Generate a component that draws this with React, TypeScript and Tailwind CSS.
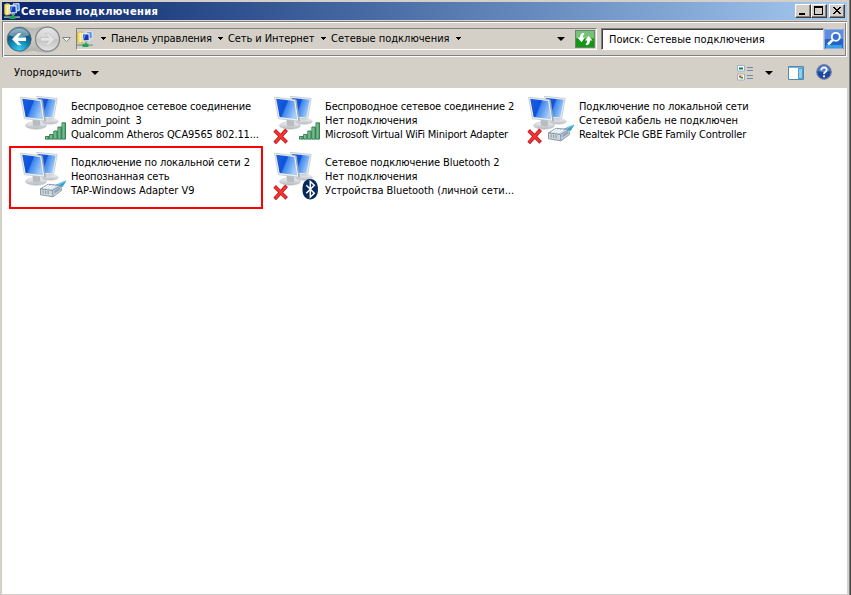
import React from "react";

type Badge = "signal" | "cable" | "bluetooth";

type Connection = {
  name: string;
  status: string;
  device: string;
  badge: Badge;
  off?: boolean;
  t: [string, string, string];
};

const connections: Connection[] = [
  { name: "Беспроводное сетевое соединение", status: "admin_point  3", device: "Qualcomm Atheros QCA9565 802.11...", badge: "signal", t: ["tracking-[-0.15px]", "tracking-[-0.22px]", "tracking-[-0.11px]"] },
  { name: "Беспроводное сетевое соединение 2", status: "Нет подключения", device: "Microsoft Virtual WiFi Miniport Adapter", badge: "signal", off: true, t: ["tracking-[-0.15px]", "tracking-[-0.05px]", "tracking-[-0.17px]"] },
  { name: "Подключение по локальной сети", status: "Сетевой кабель не подключен", device: "Realtek PCIe GBE Family Controller", badge: "cable", off: true, t: ["tracking-[-0.12px]", "tracking-[-0.04px]", "tracking-[-0.16px]"] },
  { name: "Подключение по локальной сети 2", status: "Неопознанная сеть", device: "TAP-Windows Adapter V9", badge: "cable", t: ["tracking-[-0.12px]", "tracking-[-0.16px]", "tracking-normal"] },
  { name: "Сетевое подключение Bluetooth 2", status: "Нет подключения", device: "Устройства Bluetooth (личной сети...", badge: "bluetooth", off: true, t: ["tracking-[-0.1px]", "tracking-[-0.05px]", "tracking-[-0.06px]"] },
];

function Gradients() {
  return (
    <svg width="0" height="0" className="absolute">
      <defs>
        <linearGradient id="screen" x1="0" y1="0.1" x2="1" y2="0.5">
          <stop offset="0" stopColor="#1c5fdc" />
          <stop offset="0.46" stopColor="#0f52dc" />
          <stop offset="0.52" stopColor="#3f86ee" />
          <stop offset="1" stopColor="#a5cefa" />
        </linearGradient>
        <linearGradient id="bar" x1="0" y1="0" x2="1" y2="0">
          <stop offset="0" stopColor="#9ad2ac" />
          <stop offset="1" stopColor="#4a9a66" />
        </linearGradient>
        <linearGradient id="stand" x1="0" y1="0" x2="0" y2="1">
          <stop offset="0" stopColor="#f4f5f6" />
          <stop offset="1" stopColor="#b4b8bd" />
        </linearGradient>
        <radialGradient id="back" cx="0.5" cy="0.95" r="0.9">
          <stop offset="0" stopColor="#35d0f4" />
          <stop offset="0.45" stopColor="#1387b8" />
          <stop offset="0.75" stopColor="#12567c" />
          <stop offset="1" stopColor="#6d9ab4" />
        </radialGradient>
        <linearGradient id="forward" x1="0" y1="0" x2="0" y2="1">
          <stop offset="0" stopColor="#e6e6e6" />
          <stop offset="0.48" stopColor="#d2d2d2" />
          <stop offset="0.52" stopColor="#c4c4c4" />
          <stop offset="1" stopColor="#e4e4e4" />
        </linearGradient>
        <linearGradient id="pill" x1="0" y1="0" x2="0" y2="1">
          <stop offset="0" stopColor="#b4b4b2" />
          <stop offset="0.5" stopColor="#cfccc6" />
          <stop offset="1" stopColor="#b0b0ae" />
        </linearGradient>
      </defs>
    </svg>
  );
}

function FolderNetwork() {
  return (
    <svg width="16" height="16" viewBox="0 0 16 16" className="block shrink-0">
      <path d="M.5 1.500 3 .6l3 .6v10.300l-4 .7L.5 11z" fill="#f1d765" stroke="#d0ab3a" strokeWidth=".6" />
      <path d="M2.600 2h1.800v9l-1.800.6z" fill="#fff3ac" />
      <path d="m9 .9 6-.3.300 6.900-4.800.5z" fill="#4a90e6" stroke="#e6ebef" />
      <path d="m5.200 2.600 6.800.3.300 6.600-6 .6z" fill="#1236bc" stroke="#eef1f4" strokeWidth="1.100" />
      <path d="m6.400 3.600 2.400.1-1.300 4-.8.1z" fill="#5596ec" />
      <path d="M7.500 10.300h3.300v1.500H7.500z" fill="#b8c0c6" />
      <path d="M8 11.500h2v2H8z" fill="#3faf64" />
      <path d="M0 13.300h16v1.700H0z" fill="#8fa79a" />
      <path d="M5.500 12.800h6V16h-6z" fill="#1fa458" />
    </svg>
  );
}

function ConnectionIcon({ badge, off }: { badge: Badge; off?: boolean }) {
  return (
    <svg width="55" height="54" viewBox="0 0 55 54" className="block shrink-0">
      <ellipse cx="34" cy="27.500" rx="8.500" ry="2.800" fill="url(#stand)" stroke="#c9ccd0" strokeWidth=".5" />
      <path d="m29 23 5.500-.5 1.500 4.500-6 .5z" fill="#d7dade" />
      <path d="m20.500 2.300 20.700 2.200-3.700 20.500-10-.8z" fill="#eceff1" stroke="#b9bec4" strokeWidth=".7" />
      <path d="m22 3.900 17.700 1.900-3.400 17.600-8.300-.7z" fill="url(#screen)" />
      <ellipse cx="20" cy="31.500" rx="10.500" ry="3.700" fill="url(#stand)" stroke="#babec3" strokeWidth=".6" />
      <path d="m16.500 25.500 7.500.8.300 5.200c-2 1.200-5 1-7.300 0z" fill="#b9bdc2" />
      <path d="m4.600 3.200 21 2.500L29 27.200 8.400 24.600z" fill="#eff2f4" stroke="#b5bbc2" strokeWidth=".7" />
      <path d="m25.300 5.700 1.500.2 3 21.300-1.200.2z" fill="#9da5ae" />
      <path d="m6.200 4.800 18 2.100 2.900 18.300-17.500-2.200z" fill="url(#screen)" />
      {badge === "signal" && (
        <g fill="url(#bar)" stroke="#26794a" strokeWidth=".9">
          <path d="M29.500 42.500h3.600v2.600h-3.600z" />
          <path d="M33.600 40.500h3.600v4.600h-3.600z" />
          <path d="M37.800 37h3.500v8.100h-3.500z" />
          <path d="M41.900 33h3.500v12.100h-3.500z" />
          <path d="M46 28.800h3.500v16.300H46z" />
        </g>
      )}
      {badge === "cable" && (
        <g>
          <path d="m38.500 35.500 7.500-3.500 4.500-1.500-3.500 6-4 1z" fill="#35a6d4" />
          <path d="M41 35.500 49.500 31" stroke="#7fcde8" strokeWidth="1" />
          <path d="m24.500 38.800 7.500-4.500 13 1.200.500 5-8.500 6.300-12.500-2z" fill="#cbd7e2" stroke="#72869a" strokeWidth=".8" />
          <path d="m24.500 38.800 12 1.700 8.500-5M36.500 40.500l.5 6" fill="none" stroke="#6d8297" strokeWidth=".8" />
          <path d="m27.500 38.200 5.500-3.200M30.500 38.700l5.500-3.200M33.500 39.100l5.500-3.200" stroke="#fff" strokeWidth="1.100" />
          <path d="m27 40.500.2 3m2.300-2.700.2 3m2.300-2.700.2 3" stroke="#8b8a68" strokeWidth=".9" />
          <path d="m38.200 40.700 5.800-3.700.300 2.700-6 4z" fill="#8ea6bc" />
        </g>
      )}
      {badge === "bluetooth" && (
        <g>
          <rect x="32.500" y="29" width="15.400" height="20.500" rx="7.500" ry="8.500" fill="#06295c" />
          <path d="m36.300 35.200 8 8-4 3.800V31.400l4 3.800-8 8" fill="none" stroke="#fff" strokeWidth="1.500" />
        </g>
      )}
      {off && (
        <g fill="none" strokeLinecap="square">
          <path d="m6 37.800 9.300 9.200M15.300 37.200 6 47.500" stroke="#c8141c" strokeWidth="3.800" />
          <path d="m6 37.800 9.300 9.200M15.300 37.200 6 47.500" stroke="#ee3836" strokeWidth="2.200" />
        </g>
      )}
    </svg>
  );
}

function Caret({ wide }: { wide?: boolean }) {
  return wide ? (
    <svg width="8" height="4" viewBox="0 0 8 4" className="block shrink-0"><path d="M0 0h8L4 4z" /></svg>
  ) : (
    <svg width="5" height="3" viewBox="0 0 5 3" className="block shrink-0"><path d="M0 0h5v1H4v1H3v1H2V2H1V1H0z" /></svg>
  );
}

function WindowButton({ children }: { children: React.ReactNode }) {
  return (
    <div className="h-[14px] w-4 border border-t-white border-r-[#404040] border-b-[#404040] border-l-white bg-[#d4d0c8] shadow-[inset_-1px_-1px_0_#808080]">
      <svg width="14" height="12" viewBox="0 0 14 12" className="block" shapeRendering="crispEdges">{children}</svg>
    </div>
  );
}

function TitleBar() {
  return (
    <div className="flex h-[18px] items-center bg-linear-to-r from-[#0a246a] to-[#a6caf0] pr-[2px] pl-[2px]">
      <FolderNetwork />
      <div className="ml-px flex-1 pt-px text-[11px] font-bold tracking-[0.34px] text-white">Сетевые подключения</div>
      <WindowButton><path d="M3 8h6v2H3z" /></WindowButton>
      <WindowButton><path d="M2 1h9v9H2zM3 3v6h7V3z" fillRule="evenodd" /></WindowButton>
      <div className="w-[2px]" />
      <WindowButton><path d="M3 2h2v1h1v1h2V3h1V2h2v1h-1v1H9v1H8v1h1v1h1v1h1v1H9V8H8V7H6v1H5v1H3V8h1V7h1V6h1V5H5V4H4V3H3z" /></WindowButton>
    </div>
  );
}

function NavButtons() {
  return (
    <svg width="69" height="32" viewBox="0 0 69 32" className="block shrink-0">
      <path d="M15 2.500c8 0 10 1.500 14 1.500s6-1.500 14-1.500c18 0 18 26 0 26-8 0-10-1.500-14-1.500s-6 1.500-14 1.500z" fill="url(#pill)" />
      <circle cx="15.200" cy="15.200" r="12" fill="url(#back)" stroke="#526e82" />
      <path d="M5 11C8 3 22 3 25 11c-5 3-15 3-20 0z" fill="#fff" opacity=".35" />
      <path d="m8 15.300 6-6h3.500l-3.800 4.200H22v3.600h-8.300l3.800 4.200H14z" fill="#fff" />
      <circle cx="43.500" cy="15.200" r="12" fill="url(#forward)" stroke="#858585" strokeWidth="1.200" />
      <path d="m50.500 15.300-6-6H41l3.800 4.200h-8.300v3.600h8.300L41 21.300h3.500z" fill="#e5e5e5" stroke="#bcbcbc" strokeWidth=".6" />
      <path d="M58.500 13.500h8l-4 4.200z" fill="#f6f6f6" stroke="#87888a" />
    </svg>
  );
}

function RefreshIcon() {
  return (
    <svg width="20" height="18" viewBox="0 0 20 19" preserveAspectRatio="none" className="block shrink-0">
      <rect x=".5" y=".5" width="19" height="18" fill="#239a28" stroke="#66866a" />
      <path d="M1 1h18v8H1z" fill="#74c278" />
      <path d="M1 9h18v9H1z" fill="#149716" />
      <path d="M8.500 3C6 3.500 5 5 5 8H2.500l4 5 3.500-5H8c0-2 .3-3 1.500-4z" fill="#fff" />
      <path d="M11.500 16c2.500-.5 3.500-2 3.500-5h2.500L13.500 6 10 11h2c0 2-.3 3-1.500 4z" fill="#fff" />
    </svg>
  );
}

function SearchIcon() {
  return (
    <svg width="20" height="20" viewBox="0 0 20 20" className="block shrink-0">
      <path d="M0 0h20v20H0z" fill="#3b75d4" />
      <path d="M0 0h20v10H0z" fill="#5f8ede" />
      <path d="M0 10h20v10H0z" fill="#2464ca" />
      <path d="M2 16h16v4H2z" fill="#3aa0e6" />
      <path d="M.5.500h19v19H.5z" fill="none" stroke="#8cb0e4" />
      <circle cx="11.800" cy="7.800" r="4" fill="#3a6fce" stroke="#fff" strokeWidth="1.800" />
      <path d="M8.800 10.800 4 15.500" stroke="#fff" strokeWidth="2.500" />
    </svg>
  );
}

function AddressBar() {
  return (
    <div className="flex h-9 items-start border-t border-l border-[#808080] shadow-[inset_1px_1px_0_#fff,inset_-1px_-1px_0_#fff,inset_-2px_-2px_0_#808080]">
      <div className="mt-[2px] ml-px"><NavButtons /></div>
      <div className="mt-[6px] ml-[3px] flex h-[22px] w-[521px] items-center border border-t-[#808080] border-r-white border-b-white border-l-[#808080] pb-px">
        <FolderNetwork />
        <div className="ml-2"><Caret /></div>
        <div className="ml-[5px] w-[101px] tracking-[-0.14px]">Панель управления</div>
        <div className="ml-[6px]"><Caret /></div>
        <div className="ml-[5px] w-[87px] tracking-[-0.08px]">Сеть и Интернет</div>
        <div className="ml-[6px]"><Caret /></div>
        <div className="ml-[5px] w-[119px]">Сетевые подключения</div>
        <div className="ml-[6px]"><Caret /></div>
        <div className="flex-1" />
        <Caret wide />
        <div className="mr-[1px] ml-[10px] pt-px"><RefreshIcon /></div>
      </div>
      <div className="mt-[6px] ml-1 flex h-[22px] w-[223px] items-center border border-t-[#808080] border-r-[#d4d0c8] border-b-white border-l-[#808080] bg-white pt-px pl-[7px] tracking-[-0.03px] shadow-[inset_1px_1px_0_#404040]">
        Поиск: Сетевые подключения
      </div>
      <div className="mt-[7px]"><SearchIcon /></div>
    </div>
  );
}

function CommandBar() {
  return (
    <div className="flex h-[31px] items-center pl-3">
      <span className="w-[69px]">Упорядочить</span>
      <div className="ml-[8px]"><Caret wide /></div>
      <div className="flex-1" />
      <svg width="17" height="16" viewBox="0 0 17 16" className="block">
        <path d="M1.500.500h7v5.500h-7zM1.500 9h7v6h-7z" fill="#fff" stroke="#a3b1be" />
        <path d="M3 2h4v1H3z" fill="#62b8e8" /><path d="M3 3h4v1.500H3z" fill="#1c7a50" />
        <path d="M3 10.500h2v2H3z" fill="#d93b25" /><path d="M5 10.500h2v1H5z" fill="#eab321" /><path d="M4.500 12h2.500v1.500H4.500z" fill="#27923c" />
        <path d="M11 2.500h6M11 5.500h6M11 10.500h6M11 13.500h6" stroke="#6d8aa8" />
      </svg>
      <div className="ml-3"><Caret wide /></div>
      <svg width="16" height="14" viewBox="0 0 16 14" className="ml-[15px] block">
        <path d="M.5.500h15v13H.5z" fill="#fff" stroke="#5589b5" />
        <path d="M1 1h14v1H1z" fill="#75b6e0" />
        <path d="M10 2h5v11h-5z" fill="#8bd0ed" /><path d="M10.500 2.500h4v10h-4z" fill="none" stroke="#4f9cc5" />
      </svg>
      <svg width="16" height="16" viewBox="0 0 16 16" className="-mt-px mr-[15px] ml-3 block">
        <circle cx="8" cy="8" r="7.300" fill="#1e459f" stroke="#7a89a8" strokeWidth="1.200" />
        <path d="M2 7c1-7 11-7 12 0-4 1.500-8 1.500-12 0z" fill="#5683cf" />
        <path d="M5.300 6.200C5.300 2.300 11 2.700 10.700 6 10.500 8 8 7.900 8 10M8 11.300v1.900" fill="none" stroke="#fff" strokeWidth="1.800" />
      </svg>
    </div>
  );
}

function ConnectionItem({ item }: { item: Connection }) {
  return (
    <div className="flex h-14">
      <ConnectionIcon badge={item.badge} off={item.off} />
      <div className="mt-[6px] leading-[14px] whitespace-pre">
        <div className={item.t[0]}>{item.name}</div>
        <div className={item.t[1]}>{item.status}</div>
        <div className={item.t[2]}>{item.device}</div>
      </div>
    </div>
  );
}

export default function App() {
  return (
    <div className="relative flex h-[595px] w-[851px] bg-[#d4d0c8] pt-[2px] pb-px pl-[2px] font-['DejaVu_Sans_Condensed','DejaVu_Sans',sans-serif] text-[11px] leading-[14px] whitespace-nowrap text-black [font-stretch:condensed]">
      <Gradients />
      <div className="flex w-[845px] flex-col">
        <TitleBar />
        <div className="mt-px"><AddressBar /></div>
        <CommandBar />
        <div className="grid flex-1 auto-rows-[56px] grid-cols-[254px_254px_254px] bg-white pt-[6px] pl-[14px]">
          {connections.map((c) => <ConnectionItem key={c.name} item={c} />)}
        </div>
      </div>
      <div className="ml-[2px] -mt-[2px] -mb-px w-px bg-[#808080]" />
      <div className="-mt-[2px] -mb-px w-px bg-[#404040]" />
      <div className="absolute top-[146px] left-[9px] h-[63px] w-[254px] border-2 border-[#f00]" />
    </div>
  );
}
